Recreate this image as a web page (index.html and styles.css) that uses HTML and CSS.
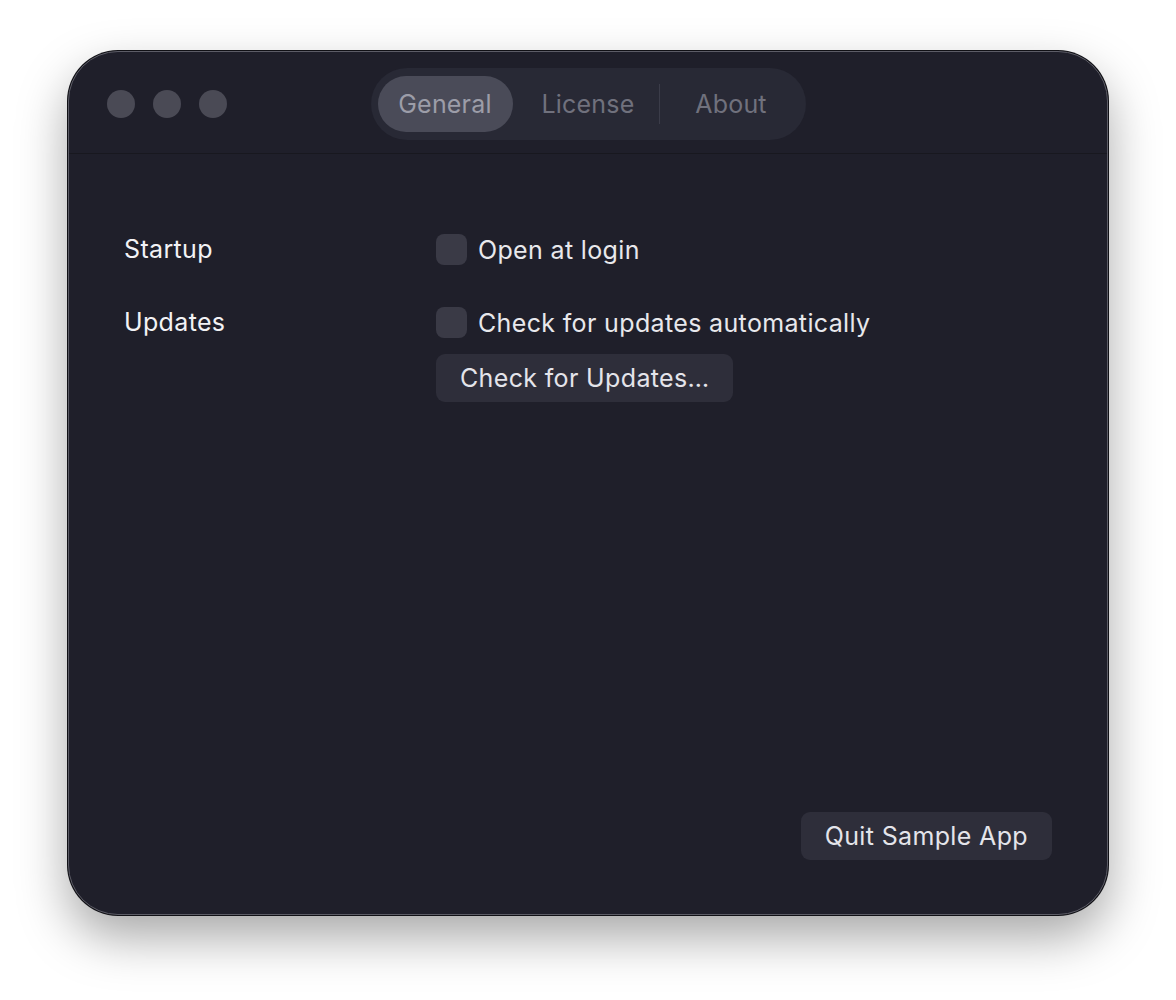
FILE: index.html
```html
<!DOCTYPE html>
<html lang="en">
<head>
    <meta charset="UTF-8">
    <meta name="viewport" content="width=device-width, initial-scale=1.0">
    <title>Sample App Settings</title>
    <link rel="stylesheet" href="styles.css">
</head>
<body>

    <div class="window">
        <div class="titlebar">
            <div class="lights">
                <span class="light"></span>
                <span class="light"></span>
                <span class="light"></span>
            </div>
            <div class="tabs">
                <div class="tab active">General</div>
                <div class="tab">License</div>
                <div class="tab-sep"></div>
                <div class="tab">About</div>
            </div>
        </div>

        <div class="content">
            <div class="settings">
                <div class="label">Startup</div>
                <div class="options">
                    <label class="check"><span class="box"></span>Open at login</label>
                </div>

                <div class="label">Updates</div>
                <div class="options">
                    <label class="check"><span class="box"></span>Check for updates automatically</label>
                    <button class="btn">Check for Updates…</button>
                </div>
            </div>

            <div class="footer">
                <button class="btn">Quit Sample App</button>
            </div>
        </div>
    </div>

</body>
</html>
```

FILE: styles.css
```css
body {
    font-family: Inter, "Open Sans", sans-serif;
    margin: 0;
    padding: 51px 68px 85px;
    background-color: #ffffff;
}

.window {
    width: 1040px;
    height: 864px;
    box-sizing: border-box;
    background: #1f1f2a;
    border: 1px solid #5c5c66;
    border-radius: 50px;
    box-shadow: 0 0 0 1px #111116, 0 22px 50px rgba(0, 0, 0, 0.35);
    display: flex;
    flex-direction: column;
    overflow: hidden;
}

/* title bar */
.titlebar {
    height: 102px;
    flex-shrink: 0;
    display: flex;
    justify-content: center;
    align-items: flex-start;
    padding-top: 16px;
    box-sizing: border-box;
    border-bottom: 1px solid #18181f;
    position: relative;
}
.lights {
    position: absolute;
    left: 38px;
    top: 38px;
    display: flex;
    gap: 18px;
}
.light {
    width: 28px;
    height: 28px;
    border-radius: 50%;
    background: #4a4a55;
}

.tabs {
    display: flex;
    align-items: center;
    gap: 8px;
    padding: 8px 7px;
    background: #282935;
    border-radius: 36px;
}
.tab {
    width: 135px;
    height: 56px;
    border-radius: 28px;
    display: flex;
    align-items: center;
    justify-content: center;
    font-size: 25px;
    letter-spacing: 0.2px;
    color: #70717d;
}
.tab.active {
    background: #4a4b58;
    color: #9c9da8;
}
.tab-sep {
    width: 1px;
    height: 40px;
    margin: 0 -4.5px;
    background: #3b3c49;
}

/* body */
.content {
    flex: 1;
    display: flex;
    flex-direction: column;
    justify-content: space-between;
    padding: 80px 55px 54px;
}
.settings {
    display: grid;
    grid-template-columns: 312px 1fr;
    row-gap: 42px;
    color: #f2f2f5;
    font-size: 25px;
    letter-spacing: 0.35px;
}
.label {
    height: 31px;
    line-height: 31px;
}
.options {
    display: flex;
    flex-direction: column;
    align-items: flex-start;
    gap: 16px;
}
.check {
    display: flex;
    align-items: center;
    gap: 11px;
    height: 31px;
    color: #e8e8ec;
}
.box {
    width: 31px;
    height: 31px;
    border-radius: 8px;
    background: #3a3a46;
}

.btn {
    font-family: inherit;
    font-size: 25px;
    letter-spacing: 0.35px;
    color: #e4e4ea;
    background: #2e2e3a;
    border: none;
    border-radius: 9px;
    height: 48px;
    padding: 0 24px;
}

.footer {
    display: flex;
    justify-content: flex-end;
}
```
